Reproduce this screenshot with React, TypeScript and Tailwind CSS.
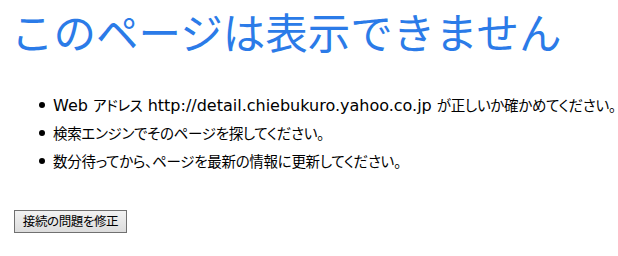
import React from "react";

const L = ({ children }: { children: React.ReactNode }) => (
  <span className="text-[16px]" style={{ fontFamily: '"DejaVu Sans", sans-serif' }}>{children}</span>
);
const J = ({ children }: { children: React.ReactNode }) => (
  <span className="text-[14.5px] tracking-[-0.3px] [font-feature-settings:'palt']" style={{ fontFamily: '"Noto Sans CJK JP", sans-serif' }}>{children}</span>
);

export default function App() {
  const items: React.ReactNode[] = [
    <>
      <L>Web </L>
      <J>アドレス</J>
      <L> http://detail.chiebukuro.yahoo.co.jp </L>
      <J>が正しいか確かめてください。</J>
    </>,
    <J>検索エンジンでそのページを探してください。</J>,
    <J>数分待ってから、ページを最新の情報に更新してください。</J>,
  ];
  return (
    <div className="w-[618px] h-[256px] bg-white overflow-hidden">
      <h1 className="pl-[11px] pt-[7px] text-[42.5px] leading-[48px] text-[#2b7be8] font-normal" style={{ fontFamily: '"Noto Sans CJK JP", sans-serif' }}>
        このページは表示できません
      </h1>
      <ul className="mt-[40px] flex flex-col gap-[8px] pl-[39px] leading-[20px] text-black">
        {items.map((t, i) => (
          <li key={i} className="flex items-center h-[20px]">
            <span className="w-[6px] h-[6px] rounded-full bg-black mr-[8px] shrink-0" />
            <span className="whitespace-nowrap">{t}</span>
          </li>
        ))}
      </ul>
      <div className="pl-[14px] mt-[37px]">
        <button className="h-[23px] w-[113px] border border-[#707070] bg-gradient-to-b from-[#f2f2f2] to-[#dcdcdc] text-[12.5px] leading-none text-black [font-feature-settings:'palt'] tracking-[-0.4px]" style={{ fontFamily: '"Noto Sans CJK JP", sans-serif' }}>
          接続の問題を修正
        </button>
      </div>
    </div>
  );
}
